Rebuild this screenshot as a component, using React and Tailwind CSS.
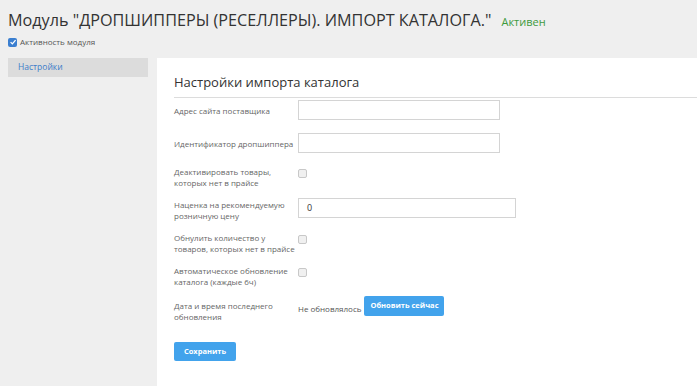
import React from 'react'

const font = { fontFamily: '"Open Sans", "Liberation Sans", sans-serif' }

function Box({ checked }) {
  return checked ? (
    <span className="w-[9px] h-[9px] rounded-[2px] bg-[#3b7fd0] flex items-center justify-center shrink-0">
      <svg viewBox="0 0 10 10" className="w-[8px] h-[8px]">
        <path d="M2 5.2 L4.2 7.4 L8.2 2.6" fill="none" stroke="#fff" strokeWidth="1.6" />
      </svg>
    </span>
  ) : (
    <span className="w-[9px] h-[9px] mt-[3px] rounded-[2px] border border-[#c8c8c8] bg-[#f0f0f0] shrink-0" />
  )
}

function Label({ children }) {
  return <div className="w-[124px] shrink-0 text-[8px] leading-[11px] text-[#666]">{children}</div>
}

function InputRow({ label, value, wide, className }) {
  return (
    <div className={`flex items-center h-[20px] ${className}`}>
      <Label>{label}</Label>
      <div className={`h-[20px] border border-[#d4d4d4] bg-white flex items-center px-[8px] text-[9px] text-[#333] ${wide ? 'w-[218px]' : 'w-[202px]'}`}>
        {value}
      </div>
    </div>
  )
}

function CheckRow({ label, className }) {
  return (
    <div className={`flex items-start ${className}`}>
      <Label>{label}</Label>
      <Box />
    </div>
  )
}

export default function App() {
  return (
    <div style={font} className="min-h-screen bg-[#efefef] flex flex-col">
      <div className="px-[8px] pt-[8px]">
        <div className="flex items-baseline">
          <h1 className="text-[16.2px] leading-[24px] text-[#333]">
            Модуль "ДРОПШИППЕРЫ (РЕСЕЛЛЕРЫ). ИМПОРТ КАТАЛОГА."
          </h1>
          <span className="ml-[10px] text-[11px] text-[#3e9a3e]">Активен</span>
        </div>
        <div className="flex items-center gap-[3px] mt-[4px] text-[8px] text-[#555]">
          <Box checked />
          <span>Активность модуля</span>
        </div>
      </div>

      <div className="flex flex-1 mt-[10px]">
        <div className="w-[157px] shrink-0 pl-[8px] pr-[9px]">
          <div className="h-[19px] bg-[#dcdcdc] pl-[10px] flex items-center text-[8.5px] text-[#3d7cc9]">
            Настройки
          </div>
        </div>

        <div className="flex-1 bg-white pl-[17px] pt-[14px]">
          <h2 className="text-[13px] leading-[20px] text-[#333]">Настройки импорта каталога</h2>
          <div className="h-px bg-[#dcdcdc] mt-[5px]" />

          <InputRow className="mt-[2px]" label="Адрес сайта поставщика" />
          <InputRow className="mt-[13px]" label="Идентификатор дропшиппера" />
          <CheckRow className="mt-[13px]" label={<>Деактивировать товары,<br />которых нет в прайсе</>} />
          <div className="flex items-start mt-[10px]">
            <div className="pt-[1px]">
              <Label>Наценка на рекомендуемую<br />розничную цену</Label>
            </div>
            <div className="h-[20px] w-[218px] border border-[#d4d4d4] bg-white flex items-center px-[8px] text-[9px] text-[#333]">
              0
            </div>
          </div>
          <CheckRow className="mt-[11px]" label={<>Обнулить количество у<br />товаров, которых нет в прайсе</>} />
          <CheckRow className="mt-[11px]" label={<>Автоматическое обновление<br />каталога (каждые 6ч)</>} />

          <div className="flex items-start mt-[13px]">
            <Label>Дата и время последнего<br />обновления</Label>
            <span className="text-[8px] leading-[11px] text-[#555] mt-[3px]">Не обновлялось</span>
            <button className="ml-[3px] -mt-[4px] h-[20px] w-[80px] rounded-[2px] bg-[#42a3ec] text-white text-[7.5px] font-bold">
              Обновить сейчас
            </button>
          </div>

          <button className="mt-[20px] h-[19px] w-[62px] rounded-[2px] bg-[#42a3ec] text-white text-[7.5px] font-bold">
            Сохранить
          </button>
        </div>
      </div>
    </div>
  )
}
